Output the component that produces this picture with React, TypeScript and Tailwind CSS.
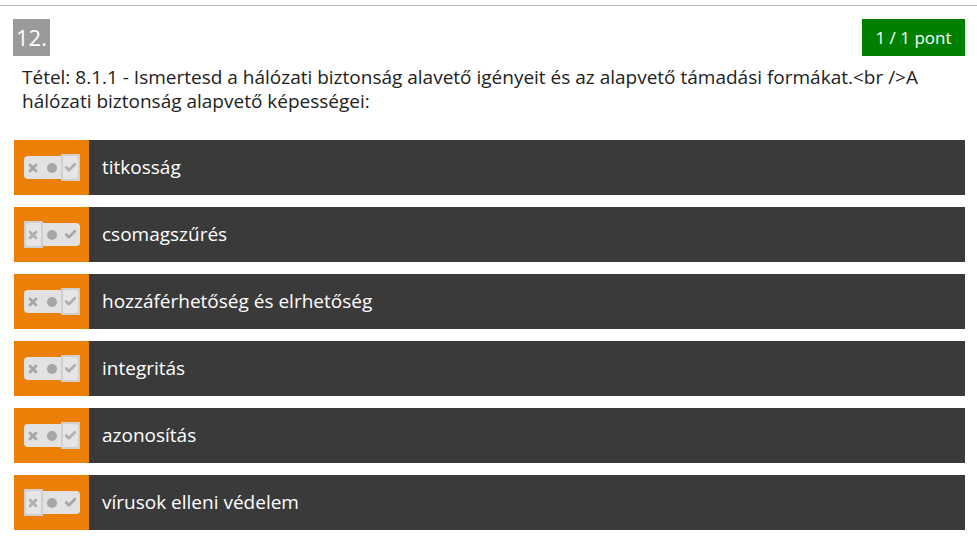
import { Check, X } from "lucide-react";

type Item = { text: string; answer: "yes" | "no" };

const items: Item[] = [
  { text: "titkosság", answer: "yes" },
  { text: "csomagszűrés", answer: "no" },
  { text: "hozzáférhetőség és elrhetőség", answer: "yes" },
  { text: "integritás", answer: "yes" },
  { text: "azonosítás", answer: "yes" },
  { text: "vírusok elleni védelem", answer: "no" },
];

const Toggle = ({ answer }: { answer: "yes" | "no" }) => {
  return (
    <div className="relative flex h-[23px] w-[56px] items-center rounded-[4px] bg-[#e2e2e2]">
      <div className="flex w-[19px] justify-center">
        <X size={12} strokeWidth={5.5} className="text-[#a6a6a6]" />
      </div>
      <div className="flex w-[18px] justify-center">
        <div className="h-[10px] w-[10px] rounded-full bg-[#a6a6a6]" />
      </div>
      <div className="flex w-[19px] justify-center">
        <Check size={13} strokeWidth={5} className="text-[#a6a6a6]" />
      </div>
      {/* selected marker */}
      <div
        className={
          answer === "yes"
            ? "absolute -top-[2px] right-0 h-[27px] w-[19px] border-2 border-[#cfcfcf] bg-white/10"
            : "absolute -top-[2px] left-0 h-[27px] w-[19px] border-2 border-[#cfcfcf] bg-white/10"
        }
      />
    </div>
  );
};

export default function App() {
  return (
    <div
      className="min-h-[555px] bg-white"
      style={{ fontFamily: '"Open Sans", "Liberation Sans", sans-serif' }}
    >
      <div className="h-[5px]" />
      <div className="border-t border-[#bbbbbb] px-[14px] pt-[13px]">
        {/* Header */}
        <div className="flex items-start justify-between">
          <div className="ml-[-1px] flex h-[37px] w-[37px] items-center justify-center bg-[#9a9a9a] text-[22px] text-white">
            12.
          </div>
          <div className="mr-[-2px] flex h-[37px] w-[103px] items-center justify-center bg-[#008000] text-[17px] text-white">
            1 / 1 pont
          </div>
        </div>

        {/* Question */}
        <p className="mt-[9px] pl-[8px] pr-[40px] text-[19px] leading-[24px] text-[#222]">
          Tétel: 8.1.1 - Ismertesd a hálózati biztonság alavető igényeit és az alapvető támadási formákat.&lt;br /&gt;A hálózati biztonság alapvető képességei:
        </p>

        {/* Answers */}
        <div className="mt-[27px] flex w-[951px] flex-col gap-[12px]">
          {items.map(({ text, answer }) => (
            <div key={text} className="flex h-[55px] bg-[#3a3a3a]">
              <div className="flex w-[75px] items-center justify-center bg-[#ec8007]">
                <Toggle answer={answer} />
              </div>
              <div className="flex items-center pl-[13px] text-[19px] text-white">{text}</div>
            </div>
          ))}
        </div>
      </div>
    </div>
  );
}
